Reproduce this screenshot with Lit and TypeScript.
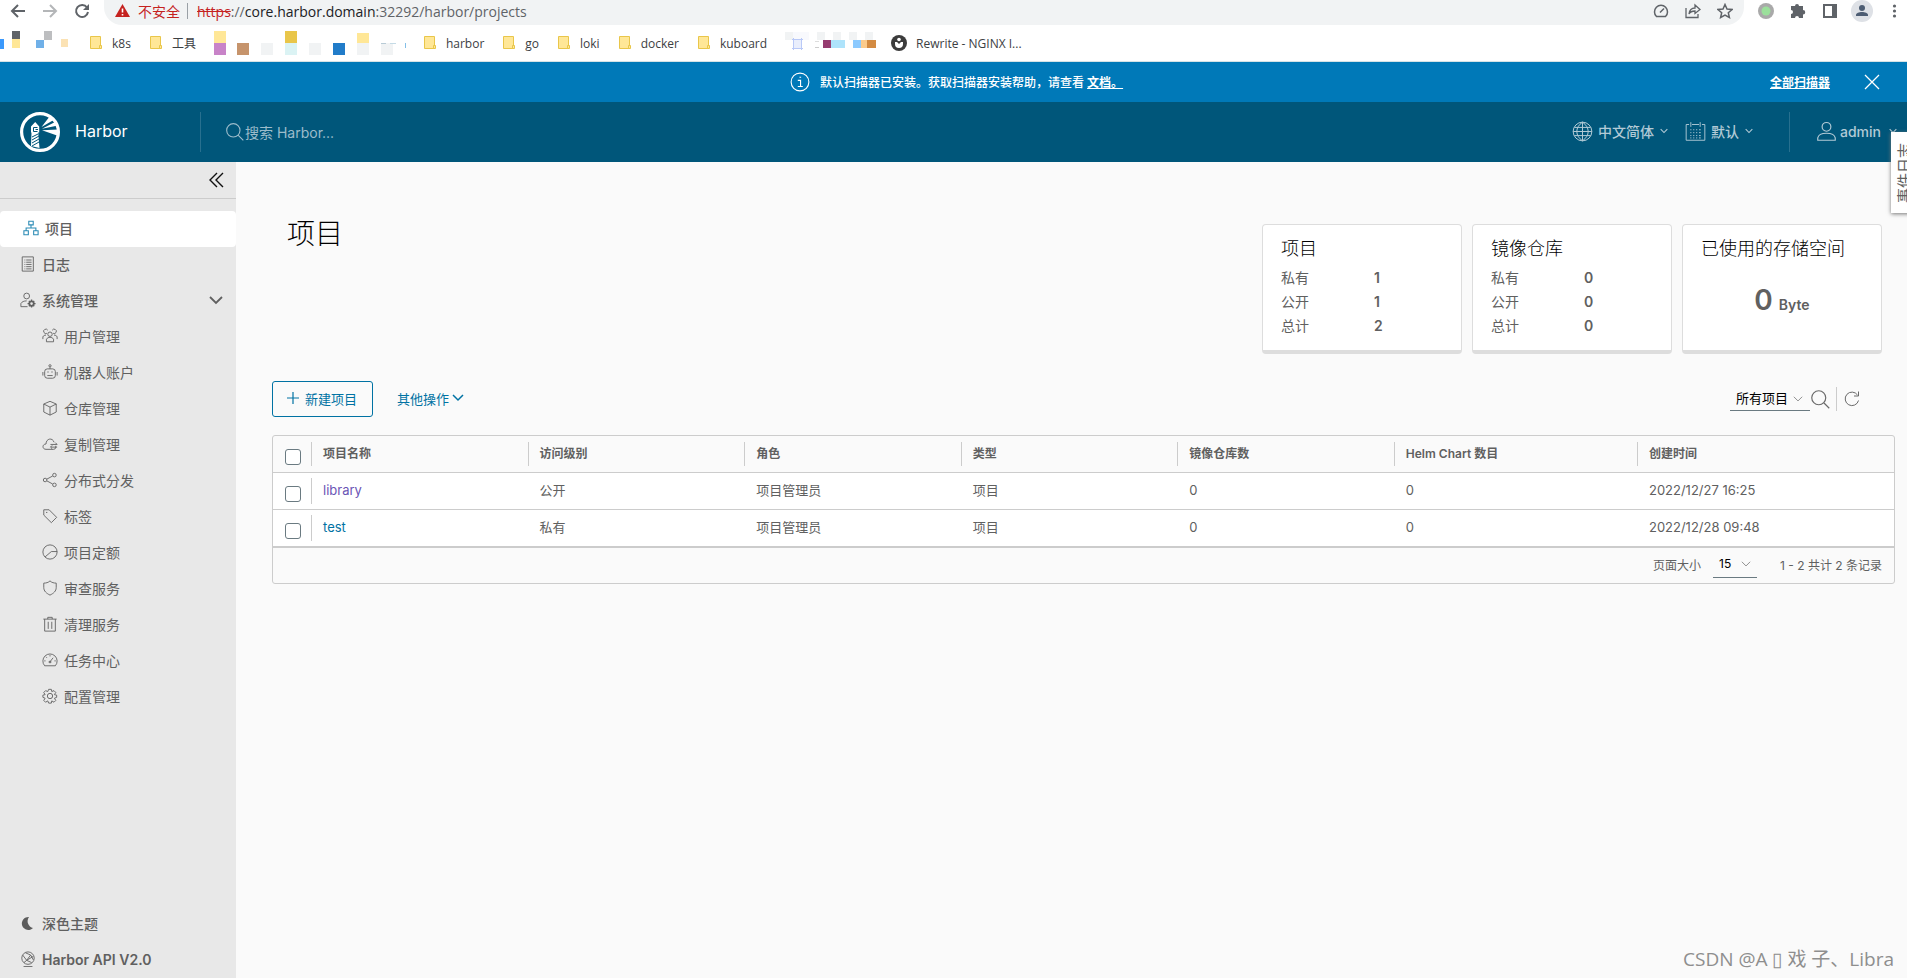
import { LitElement, html, css, svg } from "lit";
import { customElement } from "lit/decorators.js";

const stroked = (d: string, size = 16, box = 36, width = 2) => html`<svg
  class="ico" width=${size} height=${size} viewBox="0 0 ${box} ${box}"
  fill="none" stroke="currentColor" stroke-width=${width} aria-hidden="true"><path d=${d}></path></svg>`;

const ring = (x: number, y: number, r: number) =>
  `M${x - r} ${y}a${r} ${r} 0 1 0 ${2 * r} 0a${r} ${r} 0 1 0 ${-2 * r} 0`;

const CHEVRON = "M3 10l15 15 15-15";
const SEARCH = ring(15, 15, 12) + "M24 24l9 9";
const USER = ring(18, 10, 7.5) + "M3 33v-4c1-5 7-8 15-8s14 3 15 8v4z";

interface Item { label: string; icon: unknown }

const ICONS = {
  project: stroked("M13 3h10v8H13zM2 24h10v9H2zM24 24h10v9H24zM18 11v7M7 24v-6h22v6", 16, 36, 2.4),
  log: stroked("M5 2h25v32H5zM10 9h2M14 9h12M10 14h2M14 14h12M10 19h2M14 19h12M10 24h2M14 24h12M10 29h2M14 29h12", 16),
  admin: html`<svg class="ico" width="16" height="16" viewBox="0 0 36 36" fill="none" stroke="currentColor" stroke-width="2" aria-hidden="true">
    <path d=${ring(15, 9, 6.5) + "M17 33H2v-7c2-4 7-6 13-6"}></path>
    <circle cx="26" cy="26" r="5" stroke-width="4"></circle>
    <path stroke-width="3" d="M26 17v4M26 31v4M17 26h4M31 26h4M20 20l2 2M30 30l2 2M32 20l-2 2M22 30l-2 2"></path></svg>`,
};

const CHILDREN: Item[] = [
  { label: "用户管理", icon: stroked(ring(18, 14, 5) + "M10 31v-6c2-3 5-4 8-4s6 1 8 4v6zM11 12a5 5 0 1 1 2-7M25 12a5 5 0 1 0-2-7M2 25v-5c1-3 4-4 7-4M34 25v-5c-1-3-4-4-7-4") },
  { label: "机器人账户", icon: stroked(ring(18, 4, 2.5) + "M18 7v4M12 11h12a6 6 0 0 1 6 6v9a6 6 0 0 1-6 6H12a6 6 0 0 1-6-6v-9a6 6 0 0 1 6-6zM2 18v8M34 18v8M12 26h12M12 18h3M21 18h3") },
  { label: "仓库管理", icon: stroked("M18 3l14 6v18l-14 7-14-7V9zM4 9l14 7 14-7M18 16v18") },
  { label: "复制管理", icon: stroked("M31 22v3a5 5 0 0 1-5 5H9c-9 0-9-12 0-12 0-13 15-15 18-4M19 19h15M30 15l4 4M34 25H20M23 21l-4 4 4 4") },
  { label: "分布式分发", icon: stroked(ring(28, 7, 4) + ring(28, 29, 4) + ring(7, 18, 4) + "M11 16l13-7M11 20l13 7") },
  { label: "标签", icon: stroked("M4 4h12l17 17-12 12L4 16zM9 10h3") },
  { label: "项目定额", icon: stroked(ring(18, 18, 16) + "M34 17H21L7 29") },
  { label: "审查服务", icon: stroked("M18 2c4 4 9 5 14 5v10c0 8-6 13-14 17C10 30 4 25 4 17V7c5 0 10-1 14-5z") },
  { label: "清理服务", icon: stroked("M3 7h30M13 7V3h10v4M6 7v27h24V7M14 13v16M22 13v16") },
  { label: "任务中心", icon: stroked("M6 31a16 16 0 1 1 24 0zM18 22l7-9M5 20h3M28 20h3M18 7v3M9 11l2 2M16 21h4v3h-4z") },
  { label: "配置管理", icon: stroked(ring(18, 18, 6) + "M15 3h6l1 5 5-2 4 4-3 5 5 1v5l-5 2 3 5-4 4-5-3-1 5h-6l-2-5-5 3-4-4 3-5-5-2v-5l5-1-3-5 4-4 5 2z") },
];

const FONT = css`
  :host { font-family: Inter, "Noto Sans CJK SC", sans-serif; }
  * { box-sizing: border-box; }
  .ico { display: block; flex: none; }
  a { color: inherit; text-decoration: none; }
  button, input, select { font: inherit; color: inherit; }
  button { background: none; border: 0; padding: 0; display: flex; align-items: center; }
`;

const folder = html`<svg class="ico" width="14" height="16" viewBox="0 0 14 16" aria-hidden="true">
  <path d="M1.500 1.500h10v12h-10z" fill="#ffe797" stroke="#e9c64a"></path>
  <path d="M10.500 10.500h2v3h-2z" fill="#ffe797" stroke="#e9c64a"></path></svg>`;

const blocks = (w: number, cells: [number, number, number, number, string][]) => html`<svg
  class="ico" width=${w} height="28" viewBox="0 0 ${w} 28" shape-rendering="crispEdges" aria-hidden="true">${cells.map(
    ([x, y, cw, ch, c]) => svg`<rect x=${x} y=${y} width=${cw} height=${ch} fill=${c}></rect>`)}</svg>`;

@customElement("browser-chrome")
class BrowserChrome extends LitElement {
  static styles = [FONT, css`
    :host { display: block; background: #fff; font-family: "Open Sans", "Noto Sans CJK SC", sans-serif; color: #3c4043; border-bottom: 1px solid #d5e3e6; }
    .bar { display: flex; align-items: flex-start; height: 25px; padding-left: 10px; color: #5f6368; }
    .nav { display: flex; align-items: center; height: 22px; gap: 16px; }
    .off { color: #b4b6b8; }
    .pill { flex: 1; display: flex; align-items: center; height: 25px; margin: 0 14px 0 14px; padding: 0 11px 3px; background: #f1f3f4; border-radius: 0 0 18px 18px; font-size: 14px; }
    .warn { color: #c5221f; margin-left: 8px; }
    .rule { width: 1px; height: 16px; background: #9aa0a6; margin: 0 9px 0 7px; }
    .url { flex: 1; white-space: nowrap; }
    .bad { color: #c5221f; text-decoration: line-through; }
    .host { color: #202124; }
    .tools { display: flex; gap: 16px; align-items: center; }
    .ext { display: flex; align-items: center; height: 22px; gap: 16px; padding-right: 5px; }
    .avatar { margin: 0 -3px; }
    .marks { display: flex; align-items: center; height: 36px; font-size: 12px; white-space: nowrap; }
    .mark { display: flex; align-items: center; gap: 9px; margin-right: 18px; }
    .first { margin-left: 20px; }
    .mid { margin-left: 11px; }
    .nginx { margin-left: 8px; }
  `];

  render() {
    return html`
      <div class="bar">
        <div class="nav">
          <button aria-label="后退">${stroked("M15 8H2M8 2L2 8l6 6", 16, 16, 2)}</button>
          <button class="off" aria-label="前进">${stroked("M1 8h13M8 2l6 6-6 6", 16, 16, 2)}</button>
          <button aria-label="刷新"><svg class="ico" width="16" height="16" viewBox="0 0 16 16" aria-hidden="true"><path d="M13 4.500A6 6 0 1 0 14 9" fill="none" stroke="currentColor" stroke-width="2"></path><path d="M15 1v6H9z" fill="currentColor"></path></svg></button>
        </div>
        <div class="pill">
          <svg class="ico" width="15" height="14" viewBox="0 0 15 14" aria-hidden="true"><path d="M7.500 0L15 13H0z" fill="#c5221f"></path><path d="M7.500 4.500v4M7.500 10v1.500" stroke="#fff" stroke-width="1.600"></path></svg>
          <span class="warn">不安全</span><span class="rule"></span>
          <span class="url"><span class="bad">https</span>://<span class="host">core.harbor.domain</span>:32292/harbor/projects</span>
          <span class="tools">
            <button aria-label="性能">${stroked("M3.500 13.500a6.500 6.500 0 1 1 9 0zM7 9.500l4-4M8 9.500h0", 16, 16, 1.5)}</button>
            <button aria-label="分享">${stroked("M1 5v9.500h12V11M4 11c.5-4 3-6 6-6V2l5 4.500-5 4V8c-3 0-5 1-6 3z", 16, 16, 1.3)}</button>
            <button aria-label="收藏">${stroked("M8 1.500l2 4.500 5 .5-3.700 3.200 1.100 4.800L8 12l-4.400 2.500 1.100-4.800L1 6.500 6 6z", 16, 16, 1.5)}</button>
          </span>
        </div>
        <div class="ext">
          <svg class="ico" width="16" height="16" viewBox="0 0 16 16" aria-hidden="true"><circle cx="8" cy="8" r="8" fill="#a9a9a9"></circle><circle cx="8" cy="8" r="4.500" fill="#9be09b"></circle></svg>
          <svg class="ico" width="16" height="16" viewBox="0 0 16 16" aria-hidden="true"><path d="M1 3h4a2 2 0 0 1 4 0h4v4a2 2 0 0 1 0 4.500V15H9a2 2 0 0 0-4 0H1v-4a2 2 0 0 0 0-4z" fill="#5f6368"></path></svg>
          <svg class="ico" width="16" height="16" viewBox="0 0 16 16" aria-hidden="true"><path d="M2 2h12v12H2z" fill="none" stroke="#5f6368" stroke-width="2"></path><path d="M10 2h5v12h-5z" fill="#5f6368"></path></svg>
          <svg class="ico avatar" width="22" height="22" viewBox="0 0 22 22" aria-hidden="true"><circle cx="11" cy="11" r="11" fill="#dee1e6"></circle><circle cx="11" cy="8" r="3" fill="#4d5d73"></circle><path d="M5 16v-1c0-4 12-4 12 0v1z" fill="#4d5d73"></path></svg>
          <svg class="ico" width="16" height="16" viewBox="0 0 16 16" fill="#5f6368" aria-hidden="true"><circle cx="8.500" cy="3" r="1.600"></circle><circle cx="8.500" cy="8" r="1.600"></circle><circle cx="8.500" cy="13" r="1.600"></circle></svg>
        </div>
      </div>
      <nav class="marks">
        ${blocks(69, [[0, 10, 4, 10, "#3b99fc"], [12, 2, 8, 8, "#5f6368"], [12, 10, 8, 9, "#ffe797"], [44, 2, 8, 9, "#bdbec0"], [36, 11, 8, 8, "#70b0e8"], [61, 10, 7, 8, "#fbe2b4"]])}
        <a class="mark first" href="#">${folder}k8s</a>
        <a class="mark" href="#">${folder}工具</a>
        ${blocks(198, [[0, 2, 12, 12, "#ffe797"], [0, 14, 12, 12, "#c883c8"], [23, 14, 12, 12, "#c6946c"], [47, 14, 12, 12, "#f1f3f4"], [71, 2, 12, 12, "#e9c64a"], [71, 14, 12, 12, "#dbf3f4"], [95, 14, 12, 12, "#f1f3f4"], [119, 14, 12, 12, "#217cc9"], [143, 4, 12, 10, "#ffe797"], [143, 14, 12, 12, "#f1f3f4"], [167, 14, 12, 12, "#f1f3f4"], [167, 14, 5, 1, "#b8cbd6"], [176, 14, 6, 1, "#c5dbe6"], [191, 14, 1, 5, "#83bfe8"]])}
        <a class="mark mid" href="#">${folder}harbor</a>
        <a class="mark" href="#">${folder}go</a>
        <a class="mark" href="#">${folder}loki</a>
        <a class="mark" href="#">${folder}docker</a>
        <a class="mark" href="#">${folder}kuboard</a>
        ${blocks(98, [[0, 3, 8, 8, "#f1f3f4"], [8, 3, 16, 8, "#f8f9fd"], [8, 11, 9, 9, "#e9eefc"], [7, 10, 11, 1, "#b9c9f7"], [7, 19, 11, 1, "#b9c9f7"], [8, 9, 1, 12, "#b9c9f7"], [16, 9, 1, 12, "#b9c9f7"], [32, 3, 8, 8, "#f1f3f4"], [48, 3, 8, 8, "#f1f3f4"], [64, 3, 8, 8, "#f1f3f4"], [80, 3, 8, 8, "#f1f3f4"], [30, 12, 4, 1, "#ddd"], [30, 18, 4, 1, "#ccc"], [38, 11, 8, 8, "#963c70"], [46, 11, 14, 8, "#aee3fb"], [68, 11, 8, 8, "#8ccaff"], [76, 11, 8, 8, "#fbcb8c"], [82, 11, 9, 8, "#d38b42"]])}
        <a class="mark nginx" href="#"><svg class="ico" width="16" height="16" viewBox="0 0 16 16" aria-hidden="true"><circle cx="8" cy="8" r="8" fill="#3c3c3c"></circle><path d="M4 7h2l2 2 2-2h2v2a4 4 0 0 1-8 0z" fill="#fff"></path><circle cx="8" cy="4.500" r="1.800" fill="#fff"></circle></svg>Rewrite - NGINX I...</a>
      </nav>`;
  }
}

@customElement("harbor-header")
class HarborHeader extends LitElement {
  static styles = [FONT, css`
    :host { display: block; color: #fff; }
    .alert { display: flex; align-items: center; height: 40px; background: #0079b8; font-size: 12px; padding: 0 26px 0 29px; }
    .msg { flex: 1; display: flex; align-items: center; justify-content: center; gap: 10px; font-weight: 500; margin-left: 114px; }
    .text { padding-bottom: 2px; }
    .link { text-decoration: underline; font-weight: 700; }
    .close { margin-left: 33px; }
    .head { display: flex; align-items: center; height: 60px; background: #00567a; font-size: 14px; }
    .brand { display: flex; align-items: center; gap: 15px; width: 200px; padding-left: 20px; font-size: 16px; }
    .div { width: 1px; height: 40px; background: #28708f; }
    .search { flex: 1; display: flex; align-items: center; padding-left: 24px; color: #9cbccb; }
    .search input { flex: 1; border: 0; background: none; outline: 0; padding: 0; }
    .search input::placeholder { color: #9cbccb; opacity: 1; }
    .menus { display: flex; align-items: center; color: #b2cad6; font-weight: 500; }
    .menus button { gap: 5px; padding-bottom: 2px; }
    .lang { margin-right: 17px; }
    .def { margin-right: 36px; }
    .user { padding: 0 10px 0 26px; }
    .user button { gap: 3px; }
    .small { margin-left: 1px; }
    .far { margin-left: 5px; }
  `];

  render() {
    return html`
      <div class="alert">
        <span class="msg">${stroked(ring(18, 18, 16) + "M14 15h5v11M14 26h9M17 9.500h3", 20)}
          <span class="text">默认扫描器已安装。获取扫描器安装帮助，请查看 <a class="link" href="#">文档。</a></span></span>
        <a class="link text" href="#">全部扫描器</a>
        <button class="close" aria-label="关闭">${stroked("M2 2l14 14M16 2L2 16", 18, 18, 1.3)}</button>
      </div>
      <header class="head">
        <a class="brand" href="#"><svg class="ico" width="40" height="40" viewBox="0 0 40 40" aria-hidden="true">
          <circle cx="20" cy="20" r="18.400" fill="none" stroke="#fff" stroke-width="3.200"></circle>
          <path fill="#fff" d="M11 14.500l4.200-4.500 4 4.500v6h-1l1.300 15.500-8.500-2 .5-13.500h-.5z"></path>
          <path stroke="#00567a" fill="none" d="M17.500 15.500h-4v4h4M15.500 17.500h2.500"></path>
          <path stroke="#00567a" fill="none" d="M12 25l6-3M12 28l7-4M12 31l7-4M12 34l7-4"></path>
          <path fill="#fff" d="M21.500 15L30 4l4.500 3.500zM22 16.700L36 9.500l2 4zM22 18.200l16-.7-1 6z"></path></svg><span class="text">Harbor</span></a>
        <span class="div"></span>
        <label class="search">${stroked(SEARCH, 20)}<input type="text" aria-label="搜索" placeholder="搜索 Harbor..."></label>
        <div class="menus">
          <button class="lang">${stroked(ring(18, 18, 16) + "M18 2v32M2 18h32M4 11h28M4 25h28M18 2c-13 9-13 23 0 32M18 2c13 9 13 23 0 32", 21, 36, 1.7)}中文简体<span class="small">${stroked(CHEVRON, 8, 36, 5)}</span></button>
          <button class="def">${stroked("M7 6H2v27h32V6h-5M12 6h12M10 2v8M26 2v8M9 15h2M14 15h2M19 15h2M24 15h3M9 20h2M14 20h2M19 20h2M24 20h3M9 25h2M14 25h2M19 25h2M24 25h3M9 29h2M14 29h2M19 29h2M24 29h3", 21, 36, 1.6)}默认<span class="small">${stroked(CHEVRON, 8, 36, 5)}</span></button>
          <span class="div"></span>
          <span class="user"><button>${stroked(USER, 21)}admin<span class="far">${stroked(CHEVRON, 8, 36, 5)}</span></button></span>
        </div>
      </header>`;
  }
}

@customElement("side-nav")
class SideNav extends LitElement {
  static styles = [FONT, css`
    :host { display: flex; flex-direction: column; width: 236px; flex: none; background: #e8e8e8; color: #606060; font-size: 14px; }
    .top { display: flex; justify-content: flex-end; align-items: center; height: 37px; padding-right: 12px; border-bottom: 1px solid #ccc; margin-bottom: 12px; color: #111; }
    .row { display: flex; align-items: center; height: 36px; padding: 0 0 2px 20px; gap: 6px; font-weight: 500; width: 100%; }
    .active { background: #fff; border-radius: 4px; padding-left: 23px; }
    .active .ico { color: #2b8bb5; }
    .child { padding-left: 42px; font-weight: 400; }
    .group { padding-right: 12px; }
    .grow { flex: 1; text-align: left; }
    .bottom { margin-top: auto; }
    .api { font-weight: 600; }
  `];

  render() {
    return html`
      <div class="top"><button aria-label="收起">${stroked("M9 1L2 8l7 7M15 1L8 8l7 7", 16, 16, 1.4)}</button></div>
      <a class="row active" href="#">${ICONS.project}项目</a>
      <a class="row" href="#">${ICONS.log}日志</a>
      <button class="row group">${ICONS.admin}<span class="grow">系统管理</span>${stroked("M2 5l6 6 6-6", 16, 16, 1.8)}</button>
      ${CHILDREN.map((c) => html`<a class="row child" href="#">${c.icon}${c.label}</a>`)}
      <button class="row bottom"><svg class="ico" width="16" height="16" viewBox="0 0 16 16" aria-hidden="true"><path d="M9 2a6.500 6.500 0 1 0 4 11A7 7 0 0 1 9 2z" fill="#5c5c5c"></path></svg>深色主题</button>
      <a class="row api" href="#">${stroked(ring(18, 16, 14) + "M6 9l9 12 15-9M12 4l12 5-9 12-6 5M24 9l6 11M15 21l11 5M8 35h20")}Harbor API V2.0</a>`;
  }
}

const STATS = [
  { title: "项目", rows: [["私有", 1], ["公开", 1], ["总计", 2]] },
  { title: "镜像仓库", rows: [["私有", 0], ["公开", 0], ["总计", 0]] },
];
const COLUMNS = ["项目名称", "访问级别", "角色", "类型", "镜像仓库数", "Helm Chart 数目", "创建时间"];
const PROJECTS = [
  { name: "library", seen: true, cells: ["公开", "项目管理员", "项目", "0", "0", "2022/12/27 16:25"] },
  { name: "test", seen: false, cells: ["私有", "项目管理员", "项目", "0", "0", "2022/12/28 09:48"] },
];

@customElement("project-page")
class ProjectPage extends LitElement {
  static styles = [FONT, css`
    :host { display: block; flex: 1; min-width: 0; background: #fafafa; padding: 62px 12px 24px 36px; color: #606060; font-size: 13px; }
    .intro { display: flex; justify-content: space-between; align-items: flex-start; padding: 0 13px 0 15px; margin-bottom: 27px; }
    h1 { font-size: 28px; line-height: 20px; font-weight: 300; color: #000; margin: 0; }
    .cards { display: flex; gap: 10px; }
    .card { width: 200px; height: 130px; background: #fff; border: 1px solid #ddd; border-bottom-width: 4px; border-radius: 4px; padding: 12px 18px; }
    h2 { font-size: 18px; line-height: 24px; font-weight: 300; color: #000; margin: 0 0 5px; white-space: nowrap; }
    .stat { display: flex; line-height: 24px; font-size: 14px; }
    .stat span { width: 93px; }
    .stat b, .used { font-weight: 600; }
    .used { display: flex; align-items: baseline; justify-content: center; gap: 6px; font-size: 14px; line-height: 68px; }
    .used b { font-size: 28px; font-weight: 600; }
    .tools { display: flex; align-items: center; height: 36px; margin-bottom: 18px; color: #0072a3; }
    .new { height: 36px; padding: 0 15px 2px 14px; gap: 6px; border: 1px solid #0072a3; border-radius: 3px; }
    .more { margin-left: 24px; gap: 2px; padding-bottom: 2px; }
    .filter { display: flex; align-items: center; margin-left: auto; margin-right: 34px; color: #6a6a6a; }
    .pick { display: flex; align-items: center; border-bottom: 1px solid #6a7a81; }
    .pick select { appearance: none; background: none; border: 0; outline: 0; padding: 0 0 2px 6px; color: #000; }
    .pick .ico { pointer-events: none; color: #8c8c8c; }
    .all { width: 80px; height: 24px; }
    .all select { width: 63px; }
    .sep { width: 1px; height: 24px; background: #ccc; margin: 0 6px 0 5px; }
    .grid { border: 1px solid #ccc; border-radius: 3px; }
    table { width: 100%; border-collapse: separate; border-spacing: 0; table-layout: fixed; text-align: left; }
    .c0 { width: 38px; }
    .c1 { width: 13.36%; }
    .c2 { width: 15%; }
    th, td { height: 37px; padding: 0 0 3px 12px; border-bottom: 1px solid #ccc; white-space: nowrap; vertical-align: middle; line-height: 20px; }
    th { padding: 0; font-size: 12px; font-weight: 600; }
    th div { display: flex; align-items: center; height: 24px; padding-left: 11px; border-left: 1px solid #ccc; }
    td { background: #fff; }
    .tick { padding: 5px 0 0 12px; }
    .name { padding: 0; }
    .name div { height: 26px; padding: 2px 0 0 11px; border-left: 1px solid #ccc; }
    .tick input { appearance: none; display: block; width: 16px; height: 16px; margin: 0; border: 1px solid #6a7a81; border-radius: 3px; background: #fff; }
    .link { color: #0072a3; }
    .seen { color: #6a55b5; }
    .foot { display: flex; align-items: center; justify-content: flex-end; height: 36px; padding: 0 12px 2px 0; border-top: 1px solid #ccc; font-size: 12px; }
    .size { width: 44px; height: 26px; margin: 0 23px 0 12px; }
    .size select { width: 28px; }
  `];

  render() {
    return html`
      <div class="intro">
        <h1>项目</h1>
        <div class="cards">
          ${STATS.map((s) => html`<section class="card"><h2>${s.title}</h2>
            ${s.rows.map(([k, v]) => html`<div class="stat"><span>${k}</span><b>${v}</b></div>`)}</section>`)}
          <section class="card"><h2>已使用的存储空间</h2><div class="used"><b>0</b>Byte</div></section>
        </div>
      </div>
      <div class="tools">
        <button class="new">${stroked("M6 0v12M0 6h12", 12, 12, 1.2)}新建项目</button>
        <button class="more">其他操作${stroked("M2 4l5 5 5-5", 14, 14, 1.5)}</button>
        <div class="filter">
          <label class="pick all"><select aria-label="项目类型"><option>所有项目</option></select>${stroked(CHEVRON, 10, 36, 3.5)}</label>
          <button aria-label="搜索">${stroked(SEARCH, 21)}</button>
          <span class="sep"></span>
          <button aria-label="刷新">${stroked("M29 10A13.500 13.500 0 1 0 31 21M31 3v9h-9", 18)}</button>
        </div>
      </div>
      <div class="grid">
        <table>
          <colgroup><col class="c0"><col class="c1"><col class="c1"><col class="c1"><col class="c1"><col class="c1"><col class="c2"><col></colgroup>
          <thead><tr><th class="tick"><input type="checkbox" aria-label="全选"></th>${COLUMNS.map((c) => html`<th><div>${c}</div></th>`)}</tr></thead>
          <tbody>${PROJECTS.map((p) => html`<tr>
            <td class="tick"><input type="checkbox" aria-label=${p.name}></td>
            <td class="name"><div><a class=${p.seen ? "seen" : "link"} href="#">${p.name}</a></div></td>
            ${p.cells.map((c) => html`<td>${c}</td>`)}</tr>`)}</tbody>
        </table>
        <div class="foot"><label for="size">页面大小</label>
          <span class="pick size"><select id="size"><option>15</option></select>${stroked(CHEVRON, 10, 36, 3.5)}</span>
          <span>1 - 2 共计 2 条记录</span></div>
      </div>`;
  }
}

@customElement("app-root")
class AppRoot extends LitElement {
  static styles = [FONT, css`
    :host { display: flex; flex-direction: column; min-height: 100vh; position: relative; overflow: hidden; }
    .body { flex: 1; display: flex; }
    .events { position: absolute; top: 132px; right: -8px; width: 24px; height: 81px; justify-content: center; background: #fff; color: #606060; box-shadow: 0 1px 4px #777; font-size: 15px; writing-mode: sideways-lr; }
    .mark { position: absolute; right: 13px; bottom: 5px; font-size: 19px; line-height: 28px; color: #8e8e8e; white-space: nowrap; font-family: "Open Sans", "Noto Sans CJK SC", sans-serif; }
  `];

  render() {
    return html`
      <browser-chrome></browser-chrome>
      <harbor-header></harbor-header>
      <div class="body"><side-nav></side-nav><project-page></project-page></div>
      <button class="events">事件日志</button>
      <span class="mark">CSDN @A ▯ 戏 子、Libra</span>`;
  }
}
